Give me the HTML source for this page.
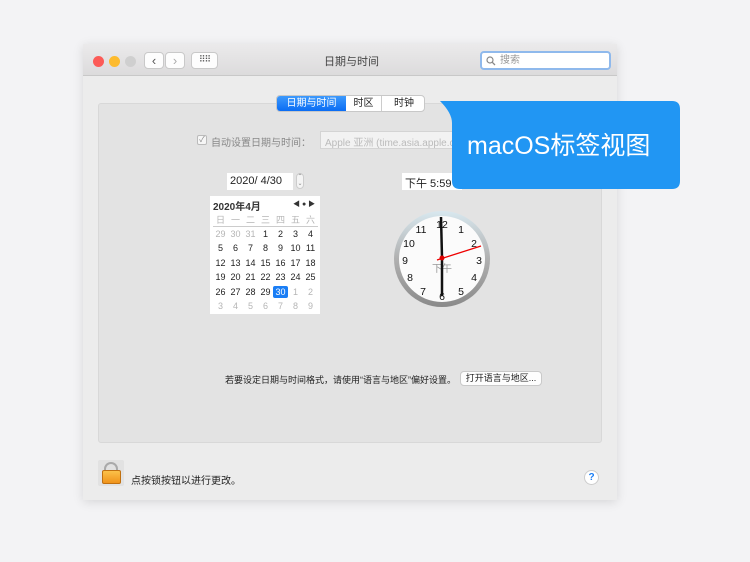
<!DOCTYPE html>
<html><head><meta charset="utf-8"><style>
*{margin:0;padding:0;box-sizing:border-box}
body{width:750px;height:562px;background:#f3f3f5;position:relative;overflow:hidden;font-family:"Liberation Sans","Noto Sans CJK SC",sans-serif;font-size:10px;color:#222}
.a{position:absolute}
.win{left:83px;top:44px;width:534px;height:456px;background:#ececec;box-shadow:0 2px 10px rgba(0,0,0,.12)}
.tb{left:0;top:0;width:534px;height:32px;background:linear-gradient(#ebeaeb,#dcdbdc);border-bottom:1px solid #c8c8c8}
.dot{width:11px;height:11px;border-radius:50%;top:12px}
.btn{background:#fdfdfd;border:1px solid #c9c9c9;border-radius:4px}
.panel{left:15px;top:59px;width:504px;height:340px;background:#e3e3e3;border:1px solid #d8d8d8;border-radius:3px}
.cal td{width:15px;height:14.5px;text-align:center;font-size:9px;padding:0}
.g{color:#b5b5b5}
</style></head><body>
<div class="a win">
 <div class="a tb">
  <div class="a dot" style="left:10px;background:#fc5b57"></div>
  <div class="a dot" style="left:26px;background:#fdbb2e"></div>
  <div class="a dot" style="left:42px;background:#cfcfcf"></div>
  <div class="a btn" style="left:61px;top:8px;width:20px;height:17px;text-align:center;line-height:15px;font-size:13px;color:#555">‹</div>
  <div class="a btn" style="left:82px;top:8px;width:20px;height:17px;text-align:center;line-height:15px;font-size:13px;color:#aaa">›</div>
  <div class="a btn" style="left:108px;top:8px;width:27px;height:17px;text-align:center;line-height:13px;font-size:9px;color:#555;letter-spacing:-1px">⠿⠿</div>
  <div class="a" style="left:241px;top:9px;font-size:11px;color:#444">日期与时间</div>
  <div class="a" style="left:397px;top:7px;width:131px;height:19px;background:#fff;border:2px solid #8fb9ec;border-radius:4px;font-size:10px;color:#999;padding-left:18px;line-height:15px">搜索
   <svg class="a" style="left:4px;top:3px" width="10" height="10"><circle cx="4" cy="4" r="3" fill="none" stroke="#888" stroke-width="1.2"/><path d="M6.3 6.3L9 9" stroke="#888" stroke-width="1.3"/></svg></div>
 </div>
 <div class="a panel"></div>
 <div class="a" style="left:193px;top:51px;width:149px;height:17px;background:#fff;border:1px solid #c8c8c8;border-radius:4px;font-size:10px;line-height:15px">
  <div class="a" style="left:0;top:0;width:69px;height:15px;background:linear-gradient(#3d99fc,#0a6cf4);color:#fff;text-align:center;border-radius:3px 0 0 3px">日期与时间</div>
  <div class="a" style="left:69px;top:0;width:36px;text-align:center;border-right:1px solid #ccc">时区</div>
  <div class="a" style="left:106px;top:0;width:42px;text-align:center">时钟</div>
 </div>
 <div class="a" style="left:114px;top:91px;width:10px;height:10px;border:1px solid #bbb;background:#f6f6f6;border-radius:2px;font-size:8px;line-height:8px;color:#888;text-align:center">✓</div>
 <div class="a" style="left:128px;top:90px;color:#888;font-size:10px">自动设置日期与时间：</div>
 <div class="a" style="left:237px;top:87px;width:140px;height:18px;background:#f2f2f2;border:1px solid #d4d4d4;color:#bbb;font-size:10px;padding:2px 4px;overflow:hidden;white-space:nowrap">Apple 亚洲 (time.asia.apple.com)</div>
 <div class="a" style="left:144px;top:129px;width:66px;height:17px;background:#fff;font-size:11px;padding:2px 3px">2020/ 4/30</div>
 <div class="a" style="left:213px;top:129px;width:8px;height:16px;border:1px solid #ccc;border-radius:4px;background:#f4f4f4;font-size:6px;color:#888;text-align:center;line-height:7px">⌃<br>⌄</div>
 <div class="a" style="left:319px;top:129px;width:60px;height:17px;background:#fff;font-size:11px;padding:2px 3px">下午 5:59</div>
 <div class="a" style="left:127px;top:152px;width:110px;height:118px;background:#fff">
  <div class="a" style="left:3px;top:2px;font-size:10px;font-weight:bold;color:#333">2020年4月</div>
  <div class="a" style="left:83px;top:3px;font-size:7px;color:#333">◀ ● ▶</div>
  <table class="cal a" style="left:3px;top:16px;border-collapse:collapse">
   <tr class="g" style="border-bottom:1px solid #ccc"><td>日</td><td>一</td><td>二</td><td>三</td><td>四</td><td>五</td><td>六</td></tr>
   <tr><td class="g">29</td><td class="g">30</td><td class="g">31</td><td>1</td><td>2</td><td>3</td><td>4</td></tr>
   <tr><td>5</td><td>6</td><td>7</td><td>8</td><td>9</td><td>10</td><td>11</td></tr>
   <tr><td>12</td><td>13</td><td>14</td><td>15</td><td>16</td><td>17</td><td>18</td></tr>
   <tr><td>19</td><td>20</td><td>21</td><td>22</td><td>23</td><td>24</td><td>25</td></tr>
   <tr><td>26</td><td>27</td><td>28</td><td>29</td><td><span style="background:#1a7ef5;color:#fff;padding:1px 2px;border-radius:2px">30</span></td><td class="g">1</td><td class="g">2</td></tr>
   <tr class="g"><td>3</td><td>4</td><td>5</td><td>6</td><td>7</td><td>8</td><td>9</td></tr>
  </table>
 </div>
 <svg class="a" style="left:310px;top:166px" width="98" height="98" viewBox="0 0 98 98">
  <defs><linearGradient id="r" x1="0" y1="0" x2="0" y2="1"><stop offset="0" stop-color="#d8e8ef"/><stop offset=".5" stop-color="#b0b0b0"/><stop offset="1" stop-color="#8a8a8a"/></linearGradient></defs>
  <circle cx="49" cy="49" r="48" fill="url(#r)"/>
  <circle cx="49" cy="49" r="43" fill="#fbfbfb"/>
  <g font-family="Liberation Sans" font-size="10.5" text-anchor="middle" fill="#111">
   <text x="49" y="18">12</text><text x="68" y="23">1</text><text x="81" y="37">2</text><text x="86" y="54">3</text><text x="81" y="71">4</text><text x="68" y="85">5</text><text x="49" y="90">6</text><text x="30" y="85">7</text><text x="17" y="71">8</text><text x="12" y="54">9</text><text x="16" y="37">10</text><text x="28" y="23">11</text>
  </g>
  <text x="49" y="62" font-size="10" fill="#999" text-anchor="middle" font-family="Noto Sans CJK SC">下午</text>
  <path d="M48 7L49 47" stroke="#111" stroke-width="2.5"/>
  <path d="M49 47L49 86" stroke="#111" stroke-width="2.5"/>
  <path d="M44 50L88 36" stroke="#e00" stroke-width="1.3"/>
  <circle cx="49" cy="48" r="2.5" fill="#d00"/>
 </svg>
 <div class="a" style="left:142px;top:329px;font-size:9px;color:#222">若要设定日期与时间格式，请使用“语言与地区”偏好设置。</div>
 <div class="a btn" style="left:377px;top:327px;width:82px;height:15px;font-size:9px;text-align:center;line-height:13px">打开语言与地区...</div>
 <div class="a" style="left:15px;top:416px;width:26px;height:26px;background:#e2e2e2;border-radius:2px"></div>
 <div class="a" style="left:21px;top:418px;width:14px;height:10px;border:2px solid #aaa;border-bottom:none;border-radius:7px 7px 0 0"></div>
 <div class="a" style="left:19px;top:426px;width:19px;height:14px;background:linear-gradient(#fbc24a,#f0931a);border:1px solid #c07010;border-radius:2px"></div>
 <div class="a" style="left:48px;top:428px;font-size:10px">点按锁按钮以进行更改。</div>
 <div class="a" style="left:501px;top:426px;width:15px;height:15px;border-radius:50%;background:#fff;border:1px solid #ccc;color:#1a7ef5;font-weight:bold;font-size:10px;text-align:center;line-height:13px">?</div>
</div>
<svg class="a" style="left:436px;top:98px" width="246" height="92"><path d="M4 3L236 3Q244 3 244 11L244 83Q244 91 236 91L24 91Q16 91 16 83L16 25Q16 15 4 3Z" fill="#2196f3"/></svg>
<div class="a" style="left:467px;top:126px;font-size:25px;color:#fff">macOS标签视图</div>
</body></html>
